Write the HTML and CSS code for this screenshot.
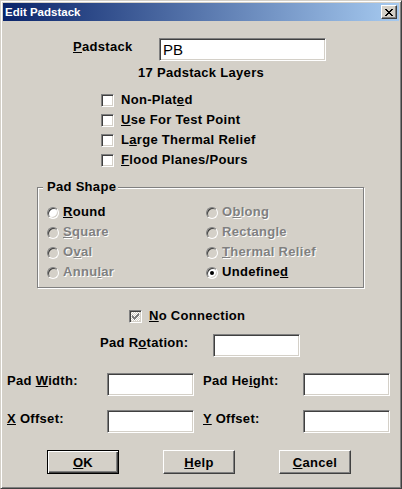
FILE: index.html
```html
<!DOCTYPE html>
<html>
<head>
<meta charset="utf-8">
<title>Edit Padstack</title>
<link rel="stylesheet" href="styles.css">
</head>
<body>
<div class="window">
  <div class="titlebar">
    <span class="title">Edit Padstack</span>
    <span class="close"><svg width="8" height="7" viewBox="0 0 8 7" shape-rendering="crispEdges"><path fill="#000" d="M0 0h2v1h-2z M6 0h2v1h-2z M1 1h2v1h-2z M5 1h2v1h-2z M2 2h4v1h-4z M3 3h2v1h-2z M2 4h4v1h-4z M1 5h2v1h-2z M5 5h2v1h-2z M0 6h2v1h-2z M6 6h2v1h-2z"/></svg></span>
  </div>
  <div class="content">
    <div class="row padstack-row">
      <span class="lbl"><u>P</u>adstack</span>
      <div class="field field-wide">PB</div>
    </div>
    <div class="layers">17 Padstack Layers</div>
    <div class="checks">
      <div class="check-row"><span class="cbox"></span><span>Non-Plat<u>e</u>d</span></div>
      <div class="check-row"><span class="cbox"></span><span><u>U</u>se For Test Point</span></div>
      <div class="check-row"><span class="cbox"></span><span>L<u>a</u>rge Thermal Relief</span></div>
      <div class="check-row"><span class="cbox"></span><span><u>F</u>lood Planes/Pours</span></div>
    </div>
    <div class="group">
      <div class="legend">Pad Shape</div>
      <div class="radios">
        <div class="radio-item"><span class="radio"></span><span><u>R</u>ound</span></div>
        <div class="radio-item"><span class="radio dis"></span><span class="dis-text">O<u>b</u>long</span></div>
        <div class="radio-item"><span class="radio dis"></span><span class="dis-text"><u>S</u>quare</span></div>
        <div class="radio-item"><span class="radio dis"></span><span class="dis-text">Rectangle</span></div>
        <div class="radio-item"><span class="radio dis"></span><span class="dis-text">O<u>v</u>al</span></div>
        <div class="radio-item"><span class="radio dis"></span><span class="dis-text"><u>T</u>hermal Relief</span></div>
        <div class="radio-item"><span class="radio dis"></span><span class="dis-text">Annu<u>l</u>ar</span></div>
        <div class="radio-item"><span class="radio"><span class="dot"></span></span><span>Undefine<u>d</u></span></div>
      </div>
    </div>
    <div class="row nc-row">
      <span class="cbox cbox-dis"><svg width="7" height="7" viewBox="0 0 7 7" shape-rendering="crispEdges"><path fill="#808080" d="M6 0h1v1h-1z M5 1h2v1h-2z M0 2h1v1h-1z M4 2h3v1h-3z M0 3h2v1h-2z M3 3h3v1h-3z M0 4h5v1h-5z M1 5h3v1h-3z M2 6h1v1h-1z"/></svg></span>
      <span><u>N</u>o Connection</span>
    </div>
    <div class="row rot-row">
      <span class="lbl">Pad R<u>o</u>tation:</span>
      <div class="field field-num"></div>
    </div>
    <div class="row size-row">
      <span class="lbl lbl-up">Pad <u>W</u>idth:</span>
      <div class="field field-num"></div>
      <span class="lbl lbl-up lbl-second">Pad He<u>i</u>ght:</span>
      <div class="field field-num"></div>
    </div>
    <div class="row off-row">
      <span class="lbl lbl-flat"><u>X</u> Offset:</span>
      <div class="field field-num"></div>
      <span class="lbl lbl-flat lbl-second"><u>Y</u> Offset:</span>
      <div class="field field-num"></div>
    </div>
    <div class="row btn-row">
      <div class="btn btn-default"><span><u>O</u>K</span></div>
      <div class="btn"><span><u>H</u>elp</span></div>
      <div class="btn"><span><u>C</u>ancel</span></div>
    </div>
  </div>
</div>
</body>
</html>
```

FILE: styles.css
```css
html, body {
  margin: 0;
  background: #d4d0c8;
  font-family: "Liberation Sans", Arial, sans-serif;
}

.window {
  width: 402px;
  height: 489px;
  box-sizing: border-box;
  border: 1px solid;
  border-color: #d4d0c8 #404040 #404040 #d4d0c8;
  box-shadow: inset 1px 1px 0 #fff, inset -1px -1px 0 #808080;
  padding: 2px;
  background: #d4d0c8;
  display: flex;
  flex-direction: column;
}

.titlebar {
  height: 18px;
  flex: none;
  background: linear-gradient(to right, #0a246a, #a6caf0);
  display: flex;
  align-items: flex-start;
  justify-content: space-between;
}

.title {
  color: #fff;
  font-weight: bold;
  font-size: 11.5px;
  line-height: 18px;
  padding-left: 2px;
}

.close {
  width: 16px;
  height: 14px;
  box-sizing: border-box;
  margin: 2px 2px 0 0;
  background: #d4d0c8;
  border: 1px solid;
  border-color: #fff #404040 #404040 #fff;
  box-shadow: inset -1px -1px 0 #808080;
  display: flex;
  align-items: center;
  justify-content: center;
}

.close svg { display: block; }

.content {
  flex: 1;
  font-size: 13px;
  font-weight: bold;
  letter-spacing: 0.3px;
  line-height: 15px;
  color: #000;
}

.row {
  display: flex;
  align-items: flex-start;
}

.lbl { flex: none; margin-top: 1px; }
.lbl-up { margin-top: 0; }
.lbl-flat { margin-top: 1px; }

.field {
  flex: none;
  box-sizing: border-box;
  height: 23px;
  background: #fff;
  border: 1px solid;
  border-color: #808080 #fff #fff #808080;
  box-shadow: inset 1px 1px 0 #404040, inset -1px -1px 0 #d4d0c8;
}

.field-wide {
  width: 167px;
  font-weight: normal;
  font-size: 15px;
  letter-spacing: 0;
  line-height: 17px;
  padding: 2px 0 0 3px;
}

.field-num { width: 87px; }

.padstack-row {
  margin-top: 17px;
  padding-left: 70px;
}
.padstack-row .lbl { width: 86px; }

.layers {
  margin-top: 4px;
  text-align: center;
}

.checks {
  margin-top: 12px;
  padding-left: 98px;
}

.check-row {
  display: flex;
  align-items: flex-start;
  height: 20px;
}

.cbox {
  flex: none;
  width: 13px;
  height: 13px;
  box-sizing: border-box;
  margin: 2px 7px 0 0;
  background: #fff;
  border: 1px solid;
  border-color: #808080 #fff #fff #808080;
  box-shadow: inset 1px 1px 0 #404040, inset -1px -1px 0 #d4d0c8;
  display: flex;
  align-items: center;
  justify-content: center;
}

.cbox-dis {
  background: repeating-conic-gradient(#fff 0 25%, #d4d0c8 0 50%) 0 0 / 2px 2px;
}

.cbox svg { display: block; }

.group {
  margin: 15px 0 0 34px;
  width: 327px;
  box-sizing: border-box;
  border: 1px solid #808080;
  box-shadow: inset 1px 1px 0 #fff, 1px 1px 0 #fff;
  padding: 0 0 3px 0;
}

.legend {
  display: table;
  margin: -9px 0 0 5px;
  padding: 0 2px 0 4px;
  background: #d4d0c8;
}

.radios {
  display: grid;
  grid-template-columns: 159px auto;
  grid-auto-rows: 20px;
  margin: 10px 0 0 9px;
}

.radio-item {
  display: flex;
  align-items: flex-start;
}

.radio {
  flex: none;
  width: 12px;
  height: 12px;
  box-sizing: border-box;
  border-radius: 50%;
  border: 1px solid;
  border-color: #808080 #fff #fff #808080;
  box-shadow: inset 1px 1px 0 #404040, inset -1px -1px 0 #d4d0c8;
  background: #fff;
  margin: 3px 4px 0 0;
  display: flex;
  align-items: center;
  justify-content: center;
}

.radio.dis { background: #d4d0c8; }

.dot {
  width: 4px;
  height: 4px;
  border-radius: 50%;
  background: #000;
}

.dis-text {
  color: #808080;
  text-shadow: 1px 1px 0 #fff;
}

.nc-row {
  margin-top: 20px;
  padding-left: 126px;
}

.rot-row {
  margin-top: 11px;
  padding-left: 97px;
}
.rot-row .lbl { width: 113px; }

.size-row {
  margin-top: 16px;
  padding-left: 4px;
}

.off-row {
  margin-top: 14px;
  padding-left: 4px;
}

.size-row .lbl, .off-row .lbl { width: 100px; }
.lbl-second { margin-left: 9px; }

.btn-row {
  margin-top: 17px;
  padding-left: 44px;
  gap: 44px;
}

.btn {
  flex: none;
  width: 72px;
  height: 24px;
  box-sizing: border-box;
  border: 1px solid;
  border-color: #fff #404040 #404040 #fff;
  box-shadow: inset -1px -1px 0 #808080;
  display: flex;
  align-items: center;
  justify-content: center;
}

.btn-default {
  border-color: #000;
  box-shadow: inset 1px 1px 0 #fff, inset -1px -1px 0 #404040, inset -2px -2px 0 #808080;
}
```
